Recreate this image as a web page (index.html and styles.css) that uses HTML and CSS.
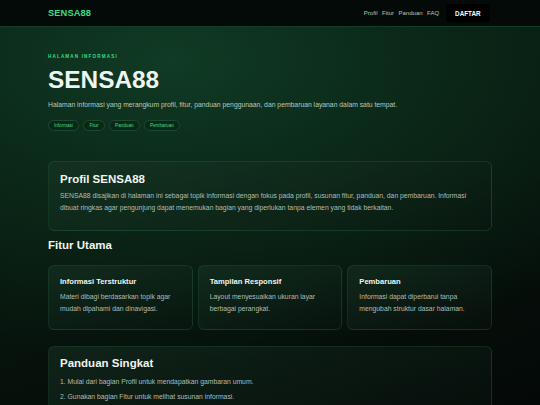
FILE: index.html
```html
<!DOCTYPE html>
<html lang="id">
<head>
<meta charset="utf-8">
<title>SENSA88</title>
<link rel="stylesheet" href="styles.css">
</head>
<body>
<header class="topbar">
  <div class="wrap topbar-inner">
    <div class="logo">SENSA88</div>
    <nav class="nav">
      <a href="#">Profil</a>
      <a href="#">Fitur</a>
      <a href="#">Panduan</a>
      <a href="#">FAQ</a>
      <a href="#" class="btn">DAFTAR</a>
    </nav>
  </div>
</header>
<main>
  <section class="hero">
    <div class="wrap">
      <div class="eyebrow">HALAMAN INFORMASI</div>
      <h1 class="title">SENSA88</h1>
      <p class="lead">Halaman informasi yang merangkum profil, fitur, panduan penggunaan, dan pembaruan layanan dalam satu tempat.</p>
      <div class="pills">
        <span class="pill">Informasi</span>
        <span class="pill">Fitur</span>
        <span class="pill">Panduan</span>
        <span class="pill">Pembaruan</span>
      </div>
    </div>
  </section>
  <div class="wrap content">
    <section class="card card-lg">
      <h2 class="card-title">Profil SENSA88</h2>
      <p class="text">SENSA88 disajikan di halaman ini sebagai topik informasi dengan fokus pada profil, susunan fitur, panduan, dan pembaruan. Informasi dibuat ringkas agar pengunjung dapat menemukan bagian yang diperlukan tanpa elemen yang tidak berkaitan.</p>
    </section>
    <h2 class="section-title">Fitur Utama</h2>
    <div class="grid">
      <div class="card card-sm">
        <h3 class="sm-title">Informasi Terstruktur</h3>
        <p class="text">Materi dibagi berdasarkan topik agar mudah dipahami dan dinavigasi.</p>
      </div>
      <div class="card card-sm">
        <h3 class="sm-title">Tampilan Responsif</h3>
        <p class="text">Layout menyesuaikan ukuran layar berbagai perangkat.</p>
      </div>
      <div class="card card-sm">
        <h3 class="sm-title">Pembaruan</h3>
        <p class="text">Informasi dapat diperbarui tanpa mengubah struktur dasar halaman.</p>
      </div>
    </div>
    <section class="card card-lg guide">
      <h2 class="card-title">Panduan Singkat</h2>
      <ol class="steps">
        <li>Mulai dari bagian Profil untuk mendapatkan gambaran umum.</li>
        <li>Gunakan bagian Fitur untuk melihat susunan informasi.</li>
      </ol>
    </section>
  </div>
</main>
</body>
</html>
```
FILE: styles.css
```css
* { box-sizing: border-box; }
html, body { margin: 0; padding: 0; }
body {
  font-family: "Liberation Sans", Arial, sans-serif;
  color: #e9f1ec;
  background:
    radial-gradient(ellipse 560px 300px at 170px 60px, #103b25 0%, #0b2818 45%, rgba(8,22,14,0) 100%),
    linear-gradient(160deg, #0a1d12 0%, #07140d 50%, #040907 100%);
  height: 405px;
  overflow: hidden;
}
.wrap { width: 444px; margin: 0 auto; }
.topbar {
  background: #040a07;
  border-bottom: 1px solid #143d27;
  height: 27px;
}
.topbar-inner {
  height: 26px;
  display: flex;
  align-items: center;
  justify-content: space-between;
}
.logo {
  color: #3ddc84;
  font-weight: 700;
  font-size: 9.3px;
  letter-spacing: 0.1px;
}
.nav { display: flex; align-items: center; gap: 4.5px; }
.nav a {
  color: #b9c6bf;
  text-decoration: none;
  font-size: 6px;
}
.nav .btn {
  margin-left: 2px;
  margin-right: 2px;
  background: #000;
  color: #fff;
  font-weight: 700;
  font-size: 6.3px;
  height: 18px;
  padding: 0 9.5px;
  border-radius: 3px;
  display: flex;
  align-items: center;
}
.hero { padding: 27px 0 30px; }
.eyebrow {
  color: #3ddc84;
  font-size: 4.6px;
  font-weight: 700;
  letter-spacing: 1.15px;
  line-height: 6px;
}
.title {
  margin: 6.5px 0 0;
  font-size: 24.4px;
  line-height: 26px;
  font-weight: 700;
  color: #eef5f0;
}
.lead {
  margin: 7.5px 0 0;
  font-size: 6.8px;
  line-height: 10px;
  color: #b8c6be;
}
.pills { display: flex; gap: 4.5px; margin-top: 10px; }
.pill {
  height: 11px;
  padding: 0 5px;
  border: 1px solid #1b4a30;
  border-radius: 6px;
  background: rgba(8, 34, 19, 0.55);
  color: #48d787;
  font-size: 4.6px;
  display: flex;
  align-items: center;
}
.card {
  border: 1px solid rgba(80, 200, 130, 0.14);
  border-radius: 6px;
  background: linear-gradient(160deg, rgba(28, 58, 42, 0.45), rgba(10, 22, 16, 0.35));
}
.card-lg { padding: 10px 11px 16px; }
.card-title {
  margin: 0;
  font-size: 11.5px;
  line-height: 14px;
  font-weight: 700;
  color: #eef5f0;
}
.text {
  margin: 4px 0 0;
  font-size: 6.8px;
  line-height: 12px;
  color: #aebdb5;
}
.section-title {
  margin: 7px 0 13px;
  font-size: 11.5px;
  line-height: 14px;
  font-weight: 700;
  color: #eef5f0;
}
.grid {
  display: grid;
  grid-template-columns: 1fr 1fr 1fr;
  gap: 5px;
}
.card-sm { padding: 11px 11px 14px; }
.sm-title {
  margin: 0;
  font-size: 7.6px;
  line-height: 10px;
  font-weight: 700;
  color: #eef5f0;
}
.guide { margin-top: 16px; padding-top: 9px; }
.steps {
  margin: 6px 0 0;
  padding: 0;
  list-style: decimal inside;
  font-size: 6.8px;
  line-height: 12px;
  color: #aebdb5;
}
.steps li + li { margin-top: 3px; }
```
